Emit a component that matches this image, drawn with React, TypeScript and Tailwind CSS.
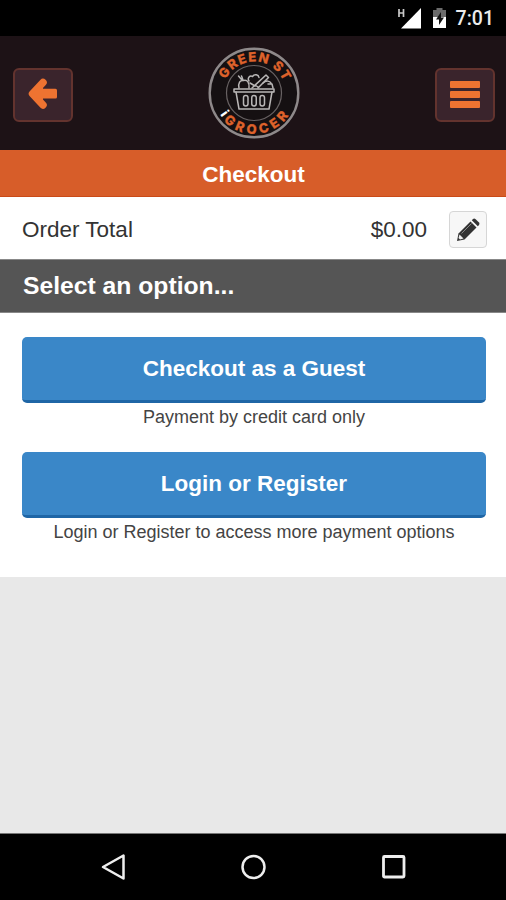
import type { ReactNode } from "react";

/* ---------- Types ---------- */
interface Option {
    id: string;
    label: string;
    note: string;
}

const options: Option[] = [
    { id: "guest", label: "Checkout as a Guest", note: "Payment by credit card only" },
    {
        id: "login",
        label: "Login or Register",
        note: "Login or Register to access more payment options",
    },
];

/* ---------- Status bar ---------- */
function StatusBar() {
    return (
        <div className="flex h-9 items-center justify-end bg-black pr-3 text-white">
            <svg width="26" height="22" viewBox="0 0 26 22" className="mr-[10px]">
                <path d="M4 2v8M8.500 2v8M4 6H8.500" stroke="#c9c9c9" strokeWidth="1.700" fill="none" />
                <path d="M26 1v20.500H6z" fill="#fff" />
            </svg>
            <svg width="16" height="22" viewBox="0 0 16 22" className="mr-[9px]">
                <path d="M5.500 1h6v2H15v7H2V3h3.500z" fill="#6b6b6b" />
                <path d="M2 10h13v11H2z" fill="#fff" />
                <path d="M10 5 5 12.500h3V18l5-7.500h-3z" fill="#111" />
            </svg>
            <span className="pt-px font-[Roboto,sans-serif] text-[19.5px] font-medium leading-none text-[#ececec]">
                7:01
            </span>
        </div>
    );
}

/* ---------- Logo ---------- */
function Logo() {
    return (
        <svg width="94" height="94" viewBox="-47 -47 94 94">
            <defs>
                <path id="arc-top" d="M-31.500 0A31.500 31.500 0 0 1 31.500 0" />
                <path id="arc-bottom" d="M-41 0A41 41 0 0 0 41 0" />
            </defs>
            <circle r="44.300" fill="#151012" stroke="#8e898a" strokeWidth="2.400" />
            <circle r="27.500" fill="none" stroke="#686263" strokeWidth="1.200" />
            <g
                fill="#dd622b"
                stroke="#dd622b"
                strokeWidth="0.300"
                fontFamily="Inter, sans-serif"
                fontWeight="800"
                fontSize="13"
                textAnchor="middle"
            >
                <text>
                    <textPath href="#arc-top" startOffset="51%" textLength="73">
                        GREEN ST
                    </textPath>
                </text>
                <text>
                    <textPath href="#arc-bottom" startOffset="52.500%" textLength="75">
                        GROCER
                    </textPath>
                </text>
            </g>
            <text
                transform="translate(-33 23) rotate(54)"
                fill="#fff"
                fontFamily="Inter, sans-serif"
                fontWeight="800"
                fontSize="13"
                textAnchor="middle"
            >
                i
            </text>
            {/* basket and groceries */}
            <g fill="none" stroke="#b9b6b6" strokeWidth="1.500" strokeLinejoin="round" strokeLinecap="round">
                <path d="M-20-4h40v3h-40z" />
                <path d="M-18-1l3 17h30L18-1" />
                <rect x="-10.500" y="2.500" width="4.500" height="10.500" rx="2.200" />
                <rect x="-2.250" y="2.500" width="4.500" height="10.500" rx="2.200" />
                <rect x="6" y="2.500" width="4.500" height="10.500" rx="2.200" />
                <path d="M-15-5c-1-5 1-8 4.500-7.500 4-1 6 2 5.500 7.500M-11-13l-1.500-4M-15.500-17l3 3.500" />
                <path d="M-5-12c-2-3 1-6 3.500-4.500 2-3 6-2 6.500 1M-2-5l14-13 2.500 2.500L4-5M1-8l3 2M-4-10l5 3" />
                <path d="M9-10c3-3 7-2 8 0M14-9h4l1 4" />
            </g>
        </svg>
    );
}

function HeaderButton({ label, children }: { label: string; children: ReactNode }) {
    return (
        <button
            aria-label={label}
            className="flex h-[54px] w-[60px] items-center justify-center rounded-[6px] border-2 border-[#63332e] bg-[#3a242c] pb-px"
        >
            {children}
        </button>
    );
}

function Header() {
    return (
        <header className="flex h-[114px] items-center justify-between bg-[#1d1216] pl-[13px] pr-[11px]">
            <div className="pt-[3px]">
                <HeaderButton label="Back">
                    <svg width="30" height="32" viewBox="0 0 30 32">
                        <path
                            d="M15 4.500 4.500 15.700 15 27z"
                            fill="#ee7331"
                        />
                        <path
                            d="M15 4.500 4.500 15.700 15 27"
                            fill="none"
                            stroke="#ee7331"
                            strokeWidth="7.500"
                            strokeLinecap="round"
                            strokeLinejoin="round"
                        />
                        <rect x="8" y="10.800" width="21" height="9.800" rx="1.500" fill="#ee7331" />
                    </svg>
                </HeaderButton>
            </div>
            <Logo />
            <div className="pt-[3px]">
                <HeaderButton label="Menu">
                    <span className="flex flex-col gap-[3px]">
                        <span className="h-[7px] w-[30px] rounded-[1px] bg-[#ee7331]" />
                        <span className="h-[7px] w-[30px] rounded-[1px] bg-[#ee7331]" />
                        <span className="h-[7px] w-[30px] rounded-[1px] bg-[#ee7331]" />
                    </span>
                </HeaderButton>
            </div>
        </header>
    );
}

function OrderTotal() {
    return (
        <div className="flex h-[62px] items-center bg-white pl-[22px] pr-[19px] pt-[3px] text-[22.5px] text-[#333]">
            <span className="flex-1">Order Total</span>
            <span>$0.00</span>
            <button
                aria-label="Edit"
                className="ml-[22px] flex h-[37px] w-[38px] items-center justify-center rounded-[4px] border border-[#d6d6d6] bg-[#f7f7f7]"
            >
                <svg width="24" height="24" viewBox="0 0 24 24">
                    <path d="M1 23l1.500-7.500L14.500 3.500l6 6L8.500 21.500z" fill="#333" />
                    <path d="M15.800 2.200l1.200-1.200q1.200-1 2.400 0l3.600 3.600q1 1.200 0 2.400l-1.200 1.200z" fill="#333" />
                    <path d="M3.500 16.500l4 4-3.500 1-1.500-1.500z" fill="#eee" />
                    <path d="M5.500 15.500 15.500 5.500" stroke="#888" strokeWidth="1" />
                </svg>
            </button>
        </div>
    );
}

/* ---------- Android navigation bar ---------- */
function NavBar() {
    return (
        <nav className="flex h-[67px] items-center justify-between border-t border-[#777] bg-black pl-[101px] pr-[99px]">
            <svg width="26" height="28" viewBox="0 0 26 28" fill="none" stroke="#eee" strokeWidth="2.500">
                <path d="M22.500 2.500v23L2 14z" strokeLinejoin="round" />
            </svg>
            <svg width="26" height="28" viewBox="0 0 26 28" fill="none" stroke="#eee" strokeWidth="2.500">
                <circle cx="12.500" cy="14" r="11" />
            </svg>
            <svg width="26" height="28" viewBox="0 0 26 28" fill="none" stroke="#eee" strokeWidth="2.800">
                <rect x="2.500" y="3.500" width="20.500" height="20.500" rx="1" />
            </svg>
        </nav>
    );
}

/* ---------- Screen ---------- */
export default function App() {
    return (
        <div className="flex h-[900px] w-[506px] flex-col bg-[#e8e8e8] font-['Liberation_Sans',Arial,sans-serif]">
            <StatusBar />
            <Header />
            <h1 className="flex h-[47px] items-center justify-center border-b border-[#c94a18] bg-[#d75d29] pl-px pt-[3px] text-[22.5px] font-bold text-white">
                Checkout
            </h1>
            <OrderTotal />
            <h2 className="flex h-[54px] items-center border-y border-[#888] bg-[#555] pl-[23px] text-[24.7px] font-bold text-white">
                Select an option...
            </h2>
            <main className="flex h-[264px] flex-col gap-[21px] bg-white px-[22px] pr-5 pt-6">
                {options.map((o) => (
                    <div key={o.id} className="flex flex-col items-center">
                        <button className="h-[66px] w-full rounded-[5px] border-b-[3px] border-[#1f66a6] bg-[#3a87c8] text-[22.5px] font-bold text-white">
                            {o.label}
                        </button>
                        <p className="text-[18px] leading-7 text-[#444]">{o.note}</p>
                    </div>
                ))}
            </main>
            <div className="flex-1" />
            <NavBar />
        </div>
    );
}
